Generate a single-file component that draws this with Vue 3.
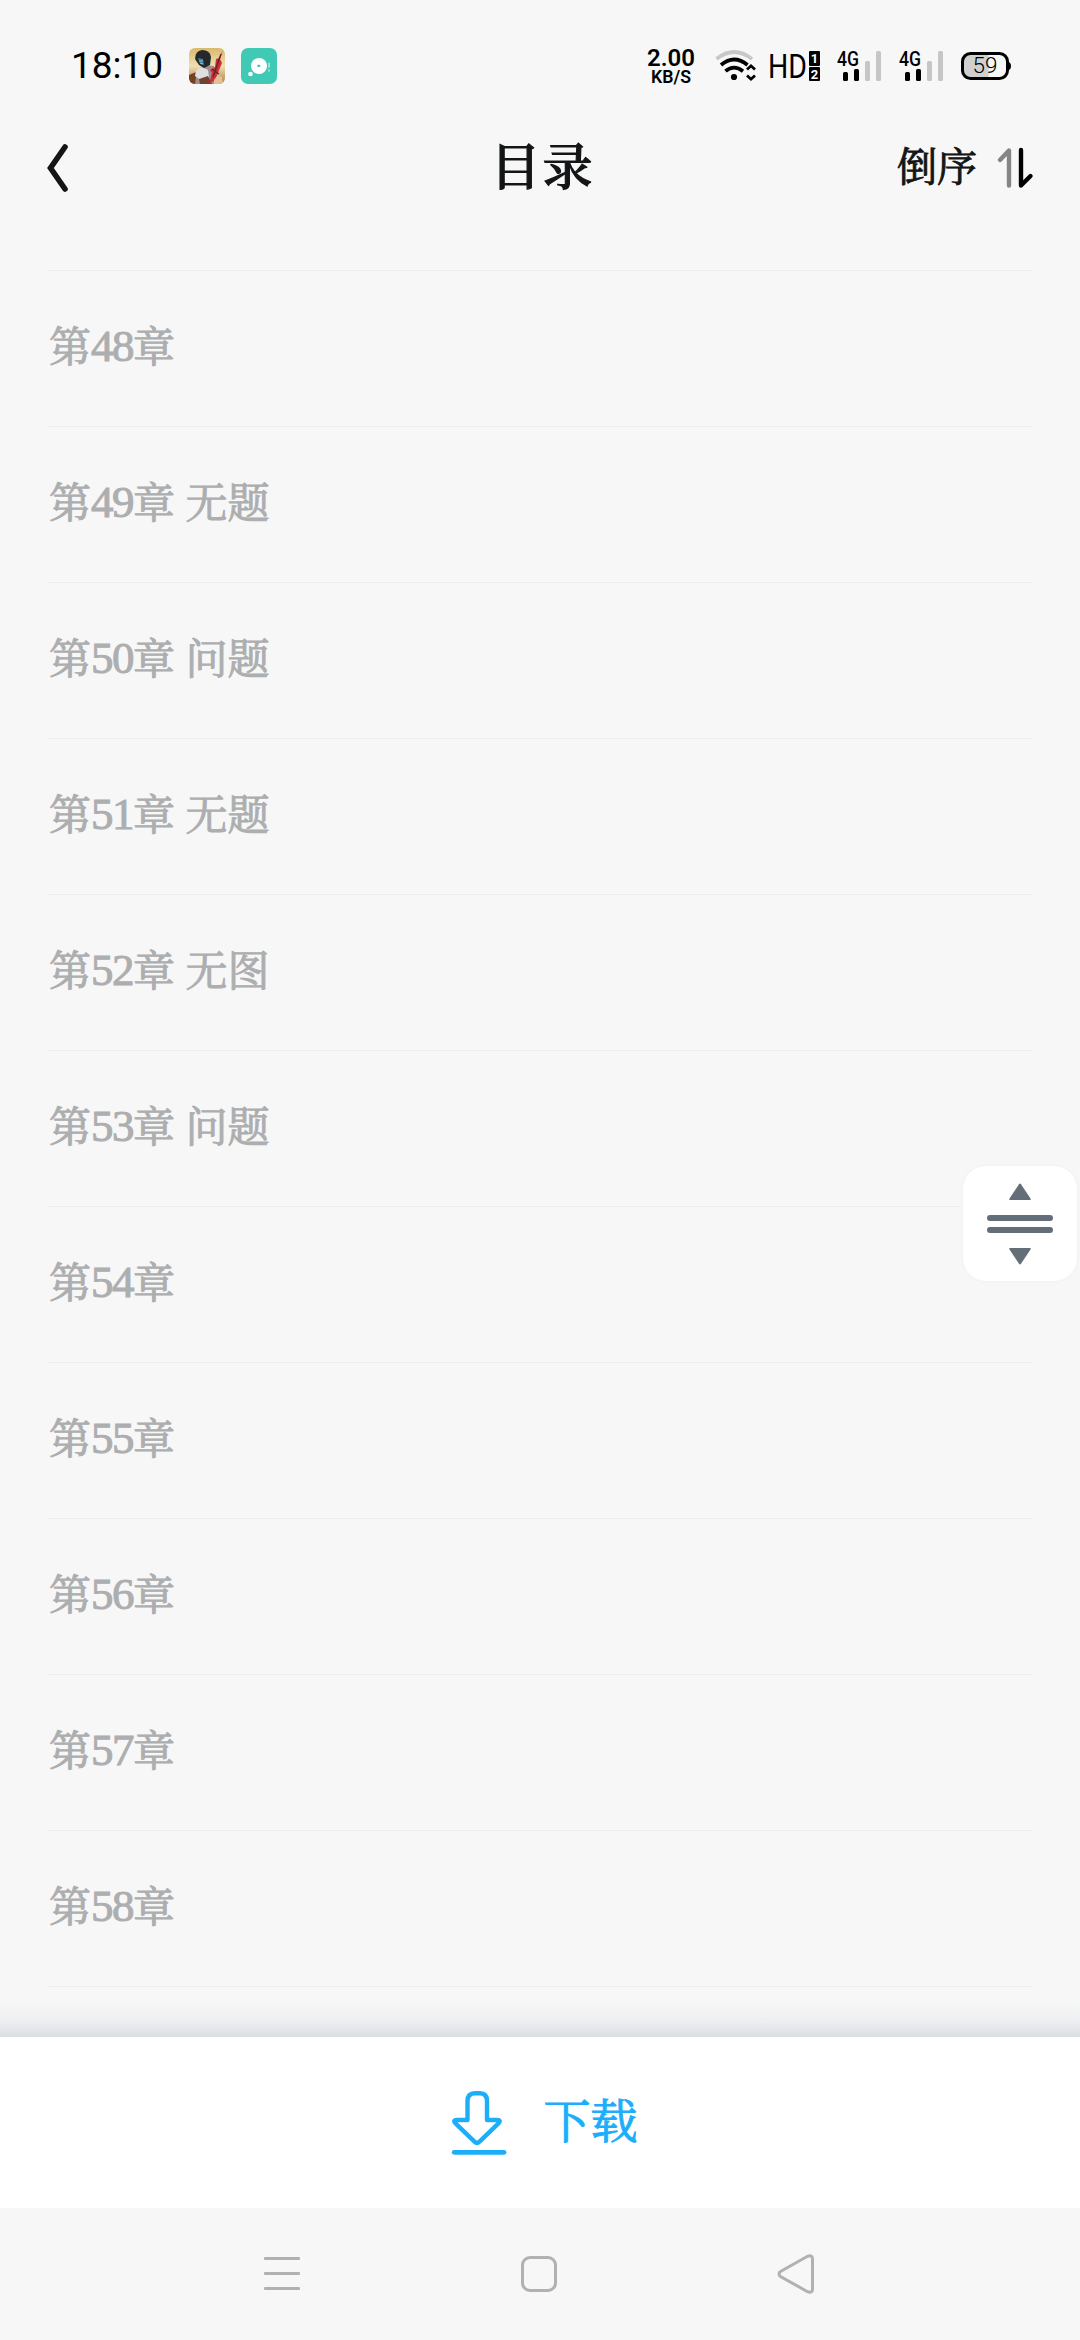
<script setup>
const chapters = [
  { no: 48, title: '' },
  { no: 49, title: '无题' },
  { no: 50, title: '问题' },
  { no: 51, title: '无题' },
  { no: 52, title: '无图' },
  { no: 53, title: '问题' },
  { no: 54, title: '' },
  { no: 55, title: '' },
  { no: 56, title: '' },
  { no: 57, title: '' },
  { no: 58, title: '' },
]
</script>

<template>
  <div class="screen">
    <div class="status">
      <span class="clock">18:10</span>
      <svg class="app-icon game" width="36" height="36" viewBox="0 0 36 36">
        <defs>
          <clipPath id="gameClip"><rect width="36" height="36" rx="6" /></clipPath>
          <linearGradient id="gameSky" x1="0" y1="0" x2="0" y2="1">
            <stop offset="0" stop-color="#d9b96e" />
            <stop offset=".5" stop-color="#f0dfb0" />
            <stop offset="1" stop-color="#b07a4c" />
          </linearGradient>
        </defs>
        <g clip-path="url(#gameClip)">
          <rect width="36" height="36" fill="url(#gameSky)" />
          <path d="M0 27l7-3 5 12H0z" fill="#754023" />
          <path d="M6 36l2-14 7-5 10 1 5 18z" fill="#9d8e90" />
          <path d="M6 28q0-8 7-9l6 3 1 7-7 4z" fill="#e0dfdf" />
          <path d="M10 31l9-3 4 8H11z" fill="#71432f" />
          <path d="M6 11Q6 3 13 2q8 0 9 7l-1 8-6 3-5-3z" fill="#25282d" />
          <path d="M9 10l5 1 1 6-4-1z" fill="#3b7c96" />
          <path d="M10 13h4M11 15l3 1" stroke="#79c9de" />
          <path d="M34 2l-3 9 2 4-7 17-6 4 3-11-2-3 5-3 1-8 3-1z" fill="#c82f38" />
          <path d="M32 6l-8 23M23 21l7 5" stroke="#71202a" stroke-width="1.5" />
          <path d="M25 32l4-5 4 2 1 7h-9z" fill="#e2c092" />
        </g>
      </svg>
      <svg class="app-icon" width="36" height="36" viewBox="0 0 36 36">
        <rect width="36" height="36" rx="7" fill="#40c9b5" />
        <circle cx="18" cy="18" r="8" fill="#fff" />
        <circle cx="9.5" cy="26" r="2.3" fill="#fff" />
        <rect x="16.2" y="16.7" width="3.2" height="2.4" rx="1" fill="#40c9b5" />
        <path d="M28 14.8v5M28 21.5v2" stroke="#b5ebe4" stroke-width="1.5" />
      </svg>

      <div class="indicators">
        <svg class="speed" width="48" height="36" viewBox="0 0 48 36">
          <text x="24" y="18" font-size="24" text-anchor="middle" textLength="48" lengthAdjust="spacingAndGlyphs">2.00</text>
          <text x="24" y="35" font-size="17.5" text-anchor="middle" textLength="40" lengthAdjust="spacingAndGlyphs">KB/S</text>
        </svg>
        <svg class="wifi" width="42" height="32" viewBox="0 0 42 32">
          <g fill="none" stroke-width="3.7">
            <path d="M1.5 9Q19 -5 37 9" stroke="#c8c8c8" />
            <path d="M6 15Q19 4 32.5 15" stroke="#000" />
            <path d="M10.5 21.2Q19 14 28 21.2" stroke="#000" />
            <path d="M32 19.5l4-3.7 4 3.7M32 25.5l4 3.7 4-3.7" stroke="#000" stroke-width="2.8" />
          </g>
          <circle cx="19" cy="27" r="3.1" />
        </svg>
        <svg class="hd" width="51" height="32" viewBox="0 0 51 32">
          <text x="-2" y="28" font-size="33.5" textLength="39" lengthAdjust="spacingAndGlyphs">HD</text>
          <rect x="39" y="1" width="11" height="15" rx="1" />
          <rect x="39" y="17" width="11" height="14" rx="1" />
          <text class="sim" x="44.5" y="13">1</text>
          <text class="sim" x="44.5" y="28.5">2</text>
        </svg>
        <svg v-for="n in 2" :key="n" class="signal" width="44" height="32" viewBox="0 0 44 32">
          <text x="0" y="15.6" textLength="22" lengthAdjust="spacingAndGlyphs">4G</text>
          <rect x="6" y="22" width="5" height="9" rx="1.5" />
          <rect x="17" y="19" width="5" height="12" rx="1.5" />
          <rect x="28" y="11" width="5" height="20" rx="1.5" fill="#c6c6c6" />
          <rect x="39" y="1" width="5" height="30" rx="1.5" fill="#c6c6c6" />
        </svg>
        <svg class="battery" width="50" height="28" viewBox="0 0 50 28">
          <path d="M8 2.5h19.5v23H8q-6-1-6-7v-9q0-6 6-7z" fill="#d0d0d0" />
          <rect x="1.5" y="1.5" width="45" height="25" rx="8" fill="none" stroke="#000" stroke-width="3" />
          <path d="M47 9.5q3 1 3 4.5t-3 4.5z" />
          <text x="24" y="21" text-anchor="middle">59</text>
        </svg>
      </div>
    </div>

    <header class="header">
      <svg class="back" width="22" height="50" viewBox="0 0 22 50">
        <path d="M18 4L3.5 25 18 46" fill="none" stroke="#131516" stroke-width="5.6" stroke-linecap="round" />
      </svg>
      <h1>目录</h1>
      <div class="order">
        <span>倒序</span>
        <svg width="36" height="42" viewBox="0 0 36 42">
          <g fill="none" stroke-width="4.4" stroke-linecap="round" stroke-linejoin="round">
            <path d="M3 13L12 3.5V38.5" stroke="#858585" />
            <path d="M24 3V38.5L33.5 29" stroke="#000" />
          </g>
        </svg>
      </div>
    </header>

    <main class="list">
      <div v-for="c in chapters" :key="c.no" class="row">
        <span>第<span class="num">{{ c.no }}</span>章{{ c.title ? ' ' + c.title : '' }}</span>
      </div>
      <div class="fade"></div>
    </main>

    <footer class="download">
      <svg width="56" height="66" viewBox="0 0 56 66">
        <g fill="none" stroke="#1daef9" stroke-width="4.4" stroke-linecap="round" stroke-linejoin="round">
          <path d="M16.5 30V11Q16.5 3.2 24 3.2H29Q36 3.2 36 11V30H46Q50.5 30 47.5 33.3L28.5 51.7Q26 54 23.5 51.7L4.5 33.3Q1.5 30 6 30Z" />
          <path d="M3.2 62.3H53" stroke-width="4.8" />
        </g>
      </svg>
      <span>下载</span>
    </footer>

    <nav class="nav">
      <svg width="36" height="34" viewBox="0 0 36 34" fill="#b1b1b1">
        <rect y="0" width="36" height="3" rx="1" />
        <rect y="15" width="36" height="3" rx="1" />
        <rect y="30" width="36" height="3" rx="1" />
      </svg>
      <svg width="36" height="36" viewBox="0 0 36 36">
        <rect x="1.5" y="1.5" width="33" height="33" rx="7.5" fill="none" stroke="#b1b1b1" stroke-width="3" />
      </svg>
      <svg width="38" height="40" viewBox="0 0 38 40">
        <path d="M3.5 17.5L30.5 2.3Q35.5 .5 35.5 5V35Q35.5 39.5 30.5 37.7L3.5 22.5Q.5 20 3.5 17.5Z" fill="none" stroke="#b1b1b1" stroke-width="3" />
      </svg>
    </nav>

    <div class="scroller">
      <svg width="66" height="82" viewBox="0 0 66 82" fill="#646e78">
        <path d="M32 1.2Q33 0 34 1.2L43.5 15.5Q44.2 17 43 17H23Q21.8 17 22.5 15.5Z" />
        <rect x="0" y="32" width="66" height="6" rx="3" />
        <rect x="0" y="44" width="66" height="6" rx="3" />
        <path d="M32 80.8Q33 82 34 80.8L43.5 66.5Q44.2 65 43 65H23Q21.8 65 22.5 66.5Z" />
      </svg>
    </div>
  </div>
</template>

<style>
body {
  margin: 0;
  background: #f7f7f7;
}
</style>

<style scoped>
.screen {
  position: relative;
  display: flex;
  flex-direction: column;
  width: 1080px;
  height: 2340px;
  overflow: hidden;
  box-sizing: border-box;
  background: #f7f7f7;
  color: #131516;
  font-family: "Liberation Serif", "Noto Serif CJK SC", "Noto Sans CJK SC", serif;
}
svg {
  display: block;
  flex: none;
  overflow: visible;
}
.status {
  display: flex;
  align-items: center;
  height: 132px;
  box-sizing: border-box;
  padding: 0 69px 0 71px;
  color: #000;
  font-family: Roboto, "Liberation Sans", sans-serif;
}
.clock {
  width: 118px;
  font-size: 37px;
  line-height: 44px;
}
.app-icon + .app-icon {
  margin-left: 16px;
}
.indicators {
  display: flex;
  align-items: center;
  margin-left: auto;
}
.speed {
  margin-right: 20px;
  font-weight: 600;
}
.wifi {
  margin-right: 13px;
}
.hd {
  margin-right: 16px;
}
.sim {
  fill: #fff;
  font-size: 13px;
  font-weight: 700;
  text-anchor: middle;
}
.signal {
  margin-right: 18px;
}
.signal text {
  font-size: 20px;
  font-weight: 500;
}
.battery text {
  font-size: 22.5px;
  font-weight: 300;
}
.header {
  display: grid;
  grid-template-columns: 1fr auto 1fr;
  align-items: center;
  height: 72px;
  padding: 0 47px 66px;
}
.header h1 {
  margin: 0;
  padding-left: 5px;
  font-size: 50px;
  font-weight: 500;
  line-height: 72px;
  letter-spacing: 2px;
  -webkit-text-stroke: 1.2px currentColor;
}
.order {
  display: flex;
  align-items: center;
  justify-self: end;
  gap: 20px;
  font-size: 40px;
  line-height: 56px;
  -webkit-text-stroke: 0.9px currentColor;
}
.list {
  position: relative;
  height: 1767px;
  overflow: hidden;
}
.row {
  display: flex;
  align-items: center;
  height: 156px;
  box-sizing: border-box;
  margin: 0 48px;
  padding: 0 0 2px 1px;
  border-top: 1px solid #eee;
  color: #adaeb0;
  font-size: 42px;
  line-height: 60px;
  -webkit-text-stroke: 1px currentColor;
}
.row:nth-last-child(2) {
  height: 157px;
  border-bottom: 1px solid #eee;
}
.num {
  position: relative;
  top: -1px;
  font-size: 45px;
  letter-spacing: -1.5px;
}
.fade {
  position: absolute;
  right: 0;
  bottom: 0;
  left: 0;
  height: 34px;
  background: linear-gradient(rgba(217, 222, 227, 0), rgba(232, 235, 238, 0.7) 55%, #d9dee3);
}
.download {
  display: flex;
  align-items: center;
  justify-content: center;
  gap: 37px;
  height: 171px;
  padding-left: 8px;
  background: #fff;
  color: #1daef9;
  font-size: 47px;
  line-height: 66px;
  -webkit-text-stroke: 1px currentColor;
}
.download span {
  padding-bottom: 2px;
}
.nav {
  display: flex;
  align-items: center;
  justify-content: space-between;
  height: 132px;
  padding: 0 265px 0 264px;
}
.scroller {
  position: absolute;
  top: 1166px;
  right: 3px;
  display: flex;
  align-items: center;
  justify-content: center;
  width: 114px;
  height: 115px;
  border-radius: 23px;
  background: #fff;
  box-shadow: 0 0 0 2px #f3f4f5;
}
</style>
